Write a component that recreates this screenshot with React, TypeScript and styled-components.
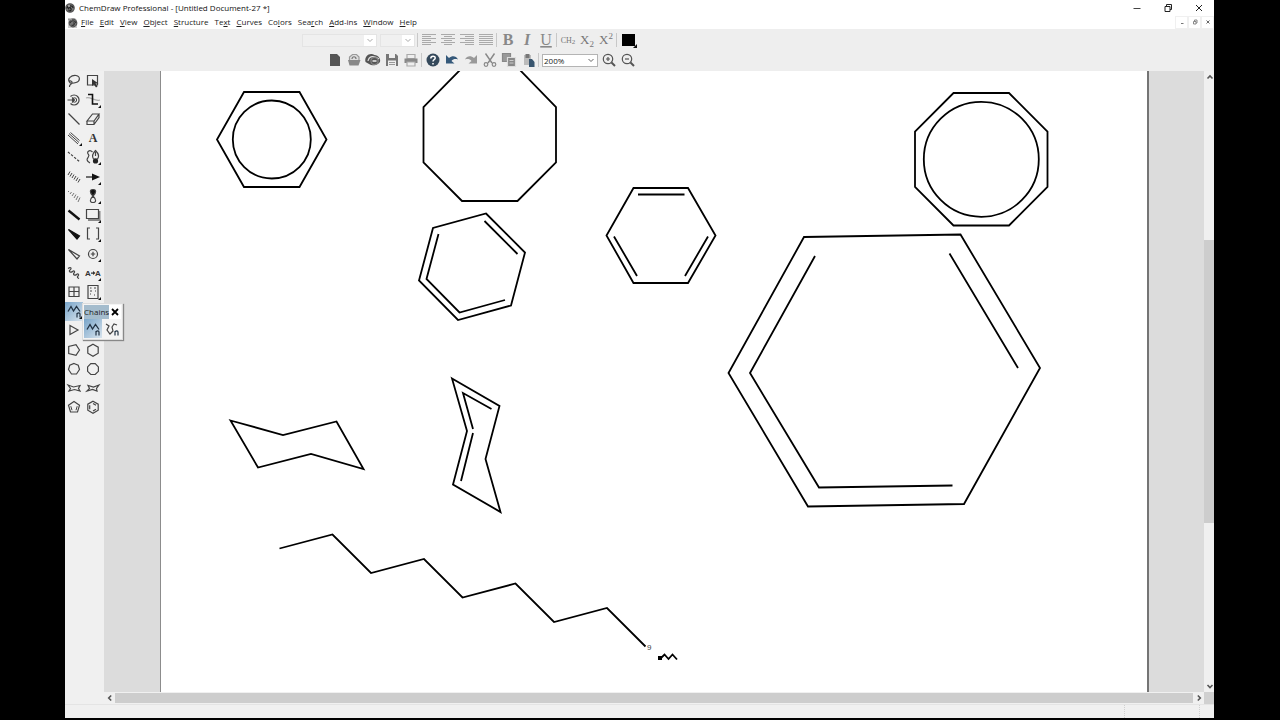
import React from "react";
import styled, { createGlobalStyle, css } from "styled-components";

const GlobalStyle = createGlobalStyle`
  * { box-sizing: border-box; }
  body { margin: 0; background: #000; color: #222; font-family: "Open Sans", "Noto Sans", sans-serif; font-size: 8px; }
  button, input, select { font: inherit; color: inherit; margin: 0; }
  svg { display: block; flex: none; }
`;

const Frame = styled.div`
  display: flex;
  flex-direction: column;
  height: 100vh;
  padding: 0 66px 2px 65px;
`;

const bare = css`
  display: flex;
  align-items: center;
  justify-content: center;
  padding: 0;
  border: 0;
  background: transparent;
`;

const TitleBar = styled.header`
  display: flex;
  align-items: center;
  height: 15px;
  background: #fff;
`;
const Title = styled.h1`
  flex: 1;
  margin: 0;
  padding-left: 4px;
  font-size: 8px;
  line-height: 15px;
  font-weight: 400;
  color: #111;
`;
const WindowButton = styled.button`
  ${bare}
  width: 31px;
  height: 15px;
`;
const MenuBar = styled.nav`
  display: flex;
  align-items: center;
  height: 14px;
  padding-left: 2px;
  background: #fff;
`;
const MenuList = styled.div`
  display: flex;
  flex: 1;
  gap: 6px;
  padding-left: 3px;
`;
const MenuButton = styled.button`
  ${bare}
  line-height: 14px;
  white-space: nowrap;
`;
const ChildButton = styled.button`
  ${bare}
  width: 13px;
  height: 13px;
  border: 1px solid #f0f0f0;
`;

const Toolbars = styled.div`
  flex: none;
  height: 42px;
  padding-top: 1px;
  background: #eee;
`;
const ToolRow = styled.div<{ $indent: number }>`
  display: flex;
  align-items: center;
  height: 20px;
  padding-left: ${(p) => p.$indent}px;
`;
const ToolButton = styled.button`
  ${bare}
  width: 19px;
  height: 19px;
`;
const Divider = styled.span`
  width: 1px;
  height: 14px;
  margin: 0 1px;
  background: #c8c8c8;
`;
const Combo = styled.label<{ $width: number; $dim?: boolean }>`
  display: flex;
  align-items: center;
  position: relative;
  width: ${(p) => p.$width}px;
  height: 13px;
  margin: 0 1px 0 2px;
  border: 1px solid ${(p) => (p.$dim ? "#e4e4e4" : "#b4b4b4")};
  background: ${(p) => (p.$dim ? "linear-gradient(to left, #fff 12px, #f0f0f0 12px)" : "#fff")};
  svg { position: absolute; right: 2px; pointer-events: none; }
`;
const ComboSelect = styled.select`
  appearance: none;
  width: 100%;
  height: 11px;
  padding: 0 0 0 1px;
  border: 0;
  background: transparent;
  color: #222;
  line-height: 11px;
`;

const Main = styled.main`
  display: flex;
  flex: 1;
  min-height: 0;
`;
const Side = styled.aside`
  position: relative;
  flex: none;
  width: 39px;
  background: #f0f0f0;
`;
const Palette = styled.div`
  display: grid;
  grid-template-columns: 18px 20px;
  grid-template-rows: repeat(18, 1fr);
  height: 346px;
`;
const PaletteButton = styled.button<{ $on?: boolean }>`
  ${bare}
  ${(p) => p.$on && css`background: linear-gradient(135deg, #78a4c8, #d8e4ee);`}
`;
const Flyout = styled.section`
  position: absolute;
  z-index: 2;
  left: 17px;
  top: 232px;
  width: 41px;
  height: 37px;
  padding: 1px;
  border: 1px solid #ddd;
  background: #f4f4f4;
  box-shadow: 1px 1px 1px #888;
`;
const FlyoutHead = styled.div`
  display: flex;
  height: 14px;
  background: #a4bccd;
`;
const FlyoutTitle = styled.h2`
  flex: 1;
  margin: 0;
  font-size: 8px;
  line-height: 13px;
  font-weight: 400;
`;
const CloseButton = styled.button`
  ${bare}
  width: 13px;
  background: #fff;
`;
const FlyoutTools = styled.div`
  display: grid;
  grid-template-columns: 18px 19px;
  height: 19px;
`;

const Document = styled.div`
  display: flex;
  flex: 1;
  flex-direction: column;
  min-width: 0;
`;
const Viewport = styled.div`
  display: flex;
  flex: 1;
  min-height: 0;
`;
const Desk = styled.div`
  display: flex;
  flex: 1;
  min-width: 0;
  padding: 0 55px 0 56px;
  background: #dcdcdc;
`;
const Page = styled.div`
  flex: 1;
  min-width: 0;
  overflow: hidden;
  border-left: 1px solid #8c8c8c;
  border-right: 2px solid #747474;
  background: #fff;
`;
const VScroll = styled.div`
  display: flex;
  flex-direction: column;
  width: 10px;
  background: #f0f0f0;
`;
const HScroll = styled.div`
  display: flex;
  height: 12px;
  background: #f0f0f0;
`;
const ScrollButton = styled.button`
  ${bare}
  flex: none;
  width: 11px;
  height: 12px;
`;
const VTrack = styled.div`
  display: grid;
  flex: 1;
  grid-template-rows: 157fr 283fr 157fr;
`;
const VThumb = styled.div`
  grid-row: 2;
  background: #cdcdcd;
`;
const HThumb = styled.div`
  flex: 1;
  margin: 1px 0;
  background: #cdcdcd;
`;
const Corner = styled.div`
  width: 10px;
  background: #d0d0d0;
`;
const StatusBar = styled.footer`
  display: flex;
  flex: none;
  justify-content: flex-end;
  height: 14px;
  padding-right: 14px;
  border-top: 1px solid #e4e4e4;
  background: #f0f0f0;
`;
const StatusCell = styled.span`
  width: 76px;
  border-left: 1px dotted #d0d0d0;
  border-right: 1px dotted #d0d0d0;
`;

const Glyph = ({ children, size = 18, color = "#444", weight = 1.2 }: { children: React.ReactNode; size?: number; color?: string; weight?: number }) => (
  <svg width={size} height={size} viewBox={`0 0 ${size} ${size}`} fill="none" stroke={color} strokeWidth={weight} aria-hidden="true">
    {children}
  </svg>
);
const Chevron = ({ dir, color = "#555", weight = 1.6 }: { dir: "up" | "down" | "left" | "right"; color?: string; weight?: number }) => {
  const d = { up: "M1.5 5.5 4 3l2.5 2.5", down: "M1.5 3 4 5.5 6.5 3", left: "M5.2 1.5 2.7 4l2.5 2.5", right: "M2.8 1.5 5.3 4 2.8 6.5" }[dir];
  return <Glyph size={8} color={color}><path d={d} strokeWidth={weight} /></Glyph>;
};
const AppLogo = () => (
  <Glyph size={10} color="#555">
    <circle cx="5" cy="5" r="4.2" fill="#777" />
    <path d="M2 5.5C2 2 8 2 8 5M3.5 7.5C6 8.5 7 6.5 5.5 5S3 5 4 6.5" stroke="#222" />
    <circle cx="4" cy="3" r="1" fill="#bbb" stroke="none" />
  </Glyph>
);
const ChildLogo = () => (
  <Glyph size={11} color="#777">
    <path d="M1 1h7l2 2v8H1z" fill="#ccc" stroke="none" />
    <circle cx="6" cy="6" r="3.8" fill="#777" stroke="#555" />
    <path d="M3 6c1-3 5-3 6 0M4.500 8c2 1 4-1 2-2.500" stroke="#333" />
    <path d="M1 2.500h4" stroke="#999" />
  </Glyph>
);

const more = <path d="M17 14v3h-3z" fill="#111" stroke="none" />;
const hex = "M9 3.200l5.200 3v6L9 15.200l-5.200-3v-6z";
const chain = <path d="M3 9.500 6 4.500l2.500 4.500L11.500 4.500 15 9.500" stroke="#234" strokeWidth="1.3" />;
const chainN = <path d="M12 15.500v-4.500m0 1c1-1.500 3-1.500 3 0v3.500" stroke="#234" strokeWidth="1.200" />;

const tools: [string, React.ReactNode][] = [
  ["Lasso", <path d="M4.500 10C2 7 6 3 11 3.500c5 1 4 6 0 7-3 1-6 1-6.500-.5 0-2 3-1 2.500.8S4 12 4.500 15" />],
  ["Marquee", <><path d="M3.500 3.500h10v9.500h-10z" /><path d="M8 7v7l2-1.500 2 3 1.500-1-2-3H14.500z" fill="#333" stroke="none" /></>],
  ["3D rotation", <><path d="M5.500 5.500a5 5 0 1 1 0 7" /><circle cx="9.500" cy="9" r="2.200" strokeWidth="1" /><path d="M2.500 9h7M7 6.500 9.500 9 7 11.500" strokeWidth="1.200" /></>],
  ["Structure perspective", <><path d="M2 7c4-2 9 4 14 2" stroke="#aaa" /><path d="M4 3.500h4.500V13H14" stroke="#111" strokeWidth="1.600" />{more}</>],
  ["Solid bond", <path d="M3.500 3.500 14.500 14.500" strokeWidth="1.300" />],
  ["Eraser", <path d="M3 11 8.500 4H15l-5 7zM3 11v3.500h7l5-7V4M10 11v3.500" />],
  ["Multiple bonds", <><path d="M3 6l10 9M4 4.500 14 13.500M5.500 3.500l9 8" strokeWidth="1" />{more}</>],
  ["Text", <text x="9" y="13" textAnchor="middle" fontFamily="Liberation Serif, serif" fontSize="12" fontWeight="700" fill="#333" stroke="none">A</text>],
  ["Dashed bond", <path d="M3 4l12 10" strokeDasharray="2.500 1.500" />],
  ["Pen", <><path d="M6 15C-1 11 7 9 4.500 6.500S5.500 1 8.500 4M9.500 11c-2-3-.5-6 2-8.500C14 5 16 8 13.500 11zM11.500 4v4" /><circle cx="11.500" cy="13" r="2.600" fill="#222" stroke="none" />{more}</>],
  ["Hashed bond", <path d="M3 7l2-3.500M5 8.500l2-3.500M7 10l2-3.500M9 11.500l2-3.500M11 13l2-3.500M13 14.500l2-3.500" strokeWidth="1" />],
  ["Arrow", <><path d="M2 9h8" strokeWidth="1.500" /><path d="M8 5.500 16 9l-8 3.500z" fill="#111" stroke="none" />{more}</>],
  ["Hashed wedge", <path d="M3 5l1-1M5 7l1.500-2M7 9l2-3M9 11l2-3.500M11 13l2-4M13 15l2-4.500" stroke="#777" strokeWidth="1" />],
  ["Orbital", <><path d="M9 9C5 5 6 2.500 9 2.500S13 5 9 9z" fill="#111" /><path d="M9 9c-4 4-3 6.500 0 6.500S13 13 9 9z" />{more}</>],
  ["Bold bond", <path d="M3.500 4.500l11 9" stroke="#111" strokeWidth="2.300" />],
  ["Drawing elements", <><path d="M15.500 5v9H4" stroke="#888" strokeWidth="2" /><path d="M2.500 3.500h12v9h-12z" />{more}</>],
  ["Wedge bond", <path d="M3.500 4.500l11 6.500-2.500 3z" fill="#111" stroke="#111" />],
  ["Brackets", <><path d="M6 3H3.500v11H6M12 3h2.500v11H12" />{more}</>],
  ["Hollow wedge", <path d="M3.500 4.500l11 6.500-2.500 3z" />],
  ["Chemical symbols", <><circle cx="9" cy="9" r="4.500" /><path d="M9 6.800v4.400M6.800 9h4.400" />{more}</>],
  ["Wavy bond", <path d="M3 4.500c3-2 4 0 2 1.500s1 3 2.500 1.500 3 0 1.500 1.500 1 3 2.500 1.500 3 0 1.500 1.500 0 2 1 2.500" />],
  ["Atom mapping", (
    <>
      <g fontFamily="Liberation Sans, sans-serif" fontSize="8" fontWeight="700" fill="#333" stroke="none">
        <text x="1" y="12">A</text>
        <text x="11" y="12">A</text>
        <path d="M7 8.500h2V7l2.500 2L9 11V9.700H7z" />
      </g>
      {more}
    </>
  )],
  ["Table", <path d="M4 4h10v9.500H4zM9 4v9.500M4 8.500h10" strokeWidth="1.200" />],
  ["Templates", <><path d="M4 2.500h10v13H4z" /><path d="M6 5h1.500M10 5h2M6 8h2M11 8h1M6 11h1M10 12h1" />{more}</>],
  ["Acyclic chain", <>{chain}{chainN}{more}</>],
  ["Ring", null],
  ["Cyclopropane ring", <path d="M5 4.500 13 9l-8 4.500z" />],
  ["Cyclobutane ring", null],
  ["Cyclopentane ring", <path d="M14.500 9 11 3.700 3.700 5.500v7L11 14.300z" />],
  ["Cyclohexane ring", <path d={hex} />],
  ["Cycloheptane ring", <path d="M9 3.500 13.200 5.200 14.500 9.500 11.500 14h-5L3.500 9.500 4.800 5.200z" />],
  ["Cyclooctane ring", <path d="M6.800 3.700h4.400l3.200 3.200v4.400l-3.200 3.200H6.800l-3.200-3.200V6.900z" />],
  ["Chair left", <path d="M3 6l5.500 2L15 6.500l-1.500 3L15 12l-5.500-1.500L4 12l1.500-2.500z" />],
  ["Chair right", <path d="M15 6l-5.500 2L4 6.500l1.500 3L3 12l5.500-1.500L13 12l-.5-2.500z" />],
  ["Cyclopentadiene ring", <><path d="M9 3.500 14.500 7.300 12.500 14h-7L3.500 7.300z" /><path d="M5.800 8.200l1.200 4M12.200 8.200l-1.200 4" strokeWidth="1" /></>],
  ["Benzene ring", <><path d={hex} /><path d="M9 5.500l3 1.700M12 11.200 9 12.900M5.700 7.200v4" /></>],
];

const menus: [string, number][] = [["File", 0], ["Edit", 0], ["View", 0], ["Object", 0], ["Structure", 0], ["Text", 2], ["Curves", 0], ["Colors", 2], ["Search", 3], ["Add-ins", 0], ["Window", 0], ["Help", 0]];

const Lines = ({ widths, x }: { widths: number[]; x: number[] }) => (
  <Glyph color="#aaa" weight={1}>{widths.map((w, i) => <path key={i} d={`M${x[i]} ${3.5 + i * 2}h${w}`} />)}</Glyph>
);
const Letter = ({ children, bold, italic, under }: { children: React.ReactNode; bold?: boolean; italic?: boolean; under?: boolean }) => (
  <Glyph><text x="9" y="14" textAnchor="middle" fontFamily="Liberation Serif, serif" fontSize="16" fontWeight={bold ? 700 : 400} fontStyle={italic ? "italic" : "normal"} textDecoration={under ? "underline" : "none"} fill="#888" stroke="none">{children}</text></Glyph>
);

const formatGroups: [string, React.ReactNode][][] = [
  [
    ["Align left", <Lines widths={[14, 9, 14, 9, 14, 9]} x={[2, 2, 2, 2, 2, 2]} />],
    ["Align center", <Lines widths={[14, 8, 14, 8, 14, 8]} x={[2, 5, 2, 5, 2, 5]} />],
    ["Align right", <Lines widths={[14, 9, 14, 9, 14, 9]} x={[2, 7, 2, 7, 2, 7]} />],
    ["Justify", <Lines widths={[14, 14, 14, 14, 14, 14]} x={[2, 2, 2, 2, 2, 2]} />],
  ],
  [["Bold", <Letter bold>B</Letter>], ["Italic", <Letter italic bold>I</Letter>], ["Underline", <Letter under>U</Letter>]],
  [
    ["Formula", <Glyph><text x="9" y="12" textAnchor="middle" fontFamily="Liberation Serif, serif" fontSize="8" fill="#777" stroke="none">CH<tspan fontSize="7" dy="1">2</tspan></text></Glyph>],
    ["Subscript", <Glyph><text x="9" y="13" textAnchor="middle" fontFamily="Liberation Serif, serif" fontSize="13" fill="#777" stroke="none">X<tspan fontSize="9" dy="3">2</tspan></text></Glyph>],
    ["Superscript", <Glyph><text x="9" y="13" textAnchor="middle" fontFamily="Liberation Serif, serif" fontSize="13" fill="#777" stroke="none">X<tspan fontSize="9" dy="-5">2</tspan></text></Glyph>],
  ],
  [["Color", <Glyph><path d="M3 3h13v12H3z" fill="#000" stroke="none" /><path d="M18 13v4h-4z" fill="#111" stroke="none" /></Glyph>]],
];

const fileGroup: [string, React.ReactNode][] = [
  ["New", <path d="M4 3h7l3 3v9H4z" fill="#555" stroke="none" />],
  ["Open", <><path d="M4.500 9V6l3-2.500h4L14 6v3" fill="#ddd" stroke="#999" /><path d="M7 8c0-3 4-3 4 0" stroke="#777" /><path d="M3 9h12.500l-2 5.500h-9z" fill="#888" stroke="none" /></>],
  ["Cloud open", <><path d="M1.500 11C0 5 6 1 10.500 4c4 0 6.500 4 5.500 7-3 4-8 4-11 2z" fill="#555" stroke="none" /><path d="M4 10c1-5 6-6 11-2" stroke="#ddd" /><circle cx="10.500" cy="10" r="3.600" fill="#555" stroke="#888" /><path d="M8.500 10h4" stroke="#eee" strokeWidth="1.500" /></>],
  ["Save", <><path d="M3 3h10l2 2v10H3z" fill="#777" stroke="none" /><path d="M6 3h6v4H6zM5 9.500h8V15H5z" fill="#eee" stroke="none" /><path d="M6 11.500h6M6 13.500h6" stroke="#999" /></>],
  ["Print", <><path d="M5 3.500h8v4H5z" fill="#eee" stroke="#aaa" /><path d="M2.500 7.500h13v4.500h-13z" fill="#888" stroke="none" /><path d="M5 11h8v4H5z" fill="#eee" stroke="#aaa" /></>],
];
const editGroup: [string, React.ReactNode][] = [
  ["Help", <><circle cx="9" cy="9" r="6.500" fill="#35495b" stroke="none" /><path d="M6.800 7.500c0-3 4.400-3 4.400-.5 0 1.800-2.200 1.500-2.200 3.500M9 12v1.500" stroke="#fff" strokeWidth="1.500" /></>],
  ["Undo", <path d="M3 4v8.500h8.500L8.500 10c1.500-2 4-2.500 6.500-1.500C13 4.500 9 4.500 6 7z" fill="#35597a" stroke="none" />],
  ["Redo", <path d="M15 4v8.500H6.500l3-2.500C8 8 5.500 7.500 3 8.500 5 4.500 9 4.500 12 7z" fill="#999" stroke="none" />],
  ["Cut", <><path d="M4.500 2.500 11 12M13.500 2.500 7 12" stroke="#888" strokeWidth="1.400" /><circle cx="5" cy="13.500" r="1.800" stroke="#888" /><circle cx="13" cy="13.500" r="1.800" stroke="#888" /></>],
  ["Copy", <><path d="M2.500 2.500h8v8h-8z" fill="#999" stroke="#888" /><path d="M7.500 6.500h8v9h-8z" fill="#888" stroke="#ddd" /><path d="M9.500 9.500h4M9.500 12h4" stroke="#ccc" /></>],
  ["Paste", <><path d="M5 4h7v10H5z" fill="#bbb" stroke="none" /><path d="M6.500 3h4v4h-4z" fill="#777" stroke="none" /><path d="M10 8h3l2.500 3v5H10z" fill="#39566f" stroke="none" /></>],
];

const structures = [
  "M244 92h55.500l27 47.500-27 47.500H244l-27-47.500z",
  "M462 68h56l38 39v55.500L517.500 201H462l-38.500-38.500V107z",
  "M486 213.500 525 252.500l-14 53-53 14.500-39-39.500L433 228zM484.500 221l33 33M438.500 234l-12 45 33 33.500 45.500-12.500",
  "M633.500 188H688l27.500 47.500L688 283h-54.500l-27-47.500zM638 194.500h46.500M614 236.500l23 39.500M708 236.500 685 276",
  "M953.500 93h55.500l38.500 38.500V187L1009 225.500h-55.500L915 187v-55.500z",
  "M804 237l156.500-2.500L1040 368l-76 136-156 2.500L728.500 373zM815 256l-65 117 69 114.500 133.500-2M949.500 253.500 1018 368",
  "M230.500 420.500 283 435l53.500-13.500L363.500 469 311 454l-53 13.500z",
  "M452 378.500 499.500 406l-14 53 15 53-47.500-27.500L467 431zM491.500 409 463 393l10 36M473 433l-12 48",
  "M279.500 548.500l53-14 38.500 38.500 53-14 38.500 38.500 53-14 38.500 38.500 53-14 38.500 38.500",
];

const Drawing = () => (
  <svg width="986" height="621" viewBox="161 71 986 621" fill="none" stroke="#000" strokeWidth="1.8" role="img" aria-label="Chemical structures">
    {structures.map((d) => <path key={d} d={d} />)}
    <circle cx="271.800" cy="139.500" r="39" />
    <circle cx="981.300" cy="159.300" r="57.500" />
    <text x="647" y="650" fontSize="8" fontFamily="Liberation Sans, sans-serif" fill="#444" stroke="none">9</text>
    <path d="M658 656h4v4h-4z" fill="#000" stroke="none" />
    <path d="M661 658l3.500-3.500L668.500 659l4-4.500 4.500 5" />
  </svg>
);

const Tool = ({ label, children }: { label: string; children: React.ReactNode }) => (
  <ToolButton type="button" aria-label={label}>{children}</ToolButton>
);

export default function App() {
  return (
    <>
      <GlobalStyle />
      <Frame>
        <TitleBar>
          <AppLogo />
          <Title>ChemDraw Professional - [Untitled Document-27 *]</Title>
          <WindowButton aria-label="Minimize"><Glyph size={10} weight={1}><path d="M1.500 5.500h7" /></Glyph></WindowButton>
          <WindowButton aria-label="Restore"><Glyph size={10} color="#222" weight={1}><path d="M2 3.500h5v5H2zM3.500 3.500v-2h5v5H7" /></Glyph></WindowButton>
          <WindowButton aria-label="Close"><Glyph size={10} color="#222" weight={1}><path d="M2 2l6 6M8 2 2 8" /></Glyph></WindowButton>
        </TitleBar>
        <MenuBar aria-label="Main menu">
          <ChildLogo />
          <MenuList>
            {menus.map(([name, k]) => (
              <MenuButton key={name} type="button"><span>{name.slice(0, k)}<u>{name[k]}</u>{name.slice(k + 1)}</span></MenuButton>
            ))}
          </MenuList>
          <ChildButton aria-label="Minimize document"><Glyph size={8} color="#777" weight={1}><path d="M3 5.500h2.500" /></Glyph></ChildButton>
          <ChildButton aria-label="Restore document"><Glyph size={8} color="#888" weight={1}><path d="M2.500 3.500h2.500v2.500H2.500zM3.500 3.500v-1.500H6v3H5" /></Glyph></ChildButton>
          <ChildButton aria-label="Close document"><Glyph size={8} color="#666" weight={1}><path d="M2.500 2.500l3 3M5.500 2.500l-3 3" /></Glyph></ChildButton>
        </MenuBar>
        <Toolbars>
          <ToolRow $indent={235}>
            <Combo $width={75} $dim><ComboSelect aria-label="Font" disabled /><Chevron dir="down" color="#aaa" weight={1} /></Combo>
            <Combo $width={35} $dim><ComboSelect aria-label="Font size" disabled /><Chevron dir="down" color="#aaa" weight={1} /></Combo>
            {formatGroups.map((group, i) => (
              <React.Fragment key={i}>
                <Divider />
                {group.map(([label, icon]) => <Tool key={label} label={label}>{icon}</Tool>)}
              </React.Fragment>
            ))}
          </ToolRow>
          <ToolRow $indent={260}>
            {fileGroup.map(([label, icon]) => <Tool key={label} label={label}><Glyph>{icon}</Glyph></Tool>)}
            <Divider />
            {editGroup.map(([label, icon]) => <Tool key={label} label={label}><Glyph>{icon}</Glyph></Tool>)}
            <Divider />
            <Combo $width={56}>
              <ComboSelect aria-label="Zoom" defaultValue="200%"><option>200%</option></ComboSelect>
              <Chevron dir="down" color="#666" weight={1} />
            </Combo>
            <Tool label="Zoom in"><Glyph color="#555"><circle cx="8" cy="8" r="4.700" /><path d="M8 6v4M6 8h4" /><path d="M11.500 11.500 15 15" strokeWidth="2" /></Glyph></Tool>
            <Tool label="Zoom out"><Glyph color="#555"><circle cx="8" cy="8" r="4.700" /><path d="M6 8h4" /><path d="M11.500 11.500 15 15" strokeWidth="2" /></Glyph></Tool>
          </ToolRow>
        </Toolbars>
        <Main>
          <Side>
            <Palette>
              {tools.map(([label, icon]) => (
                <PaletteButton key={label} type="button" aria-label={label} $on={label === "Acyclic chain"}>
                  <Glyph>{icon}</Glyph>
                </PaletteButton>
              ))}
            </Palette>
            <Flyout aria-label="Chains">
              <FlyoutHead>
                <FlyoutTitle>Chains</FlyoutTitle>
                <CloseButton aria-label="Close chains"><Glyph size={10} color="#000"><path d="M2 2l6 6M8 2 2 8" strokeWidth="1.800" /></Glyph></CloseButton>
              </FlyoutHead>
              <FlyoutTools>
                <PaletteButton type="button" aria-label="Straight chain" $on><Glyph>{chain}{chainN}</Glyph></PaletteButton>
                <PaletteButton type="button" aria-label="Snaking chain"><Glyph><path d="M3 4l3 2-2 4 3 4 3-3-1-4 2-3 3 1" />{chainN}</Glyph></PaletteButton>
              </FlyoutTools>
            </Flyout>
          </Side>
          <Document>
            <Viewport>
              <Desk><Page><Drawing /></Page></Desk>
              <VScroll>
                <ScrollButton aria-label="Scroll up"><Chevron dir="up" /></ScrollButton>
                <VTrack><VThumb /></VTrack>
                <ScrollButton aria-label="Scroll down"><Chevron dir="down" /></ScrollButton>
              </VScroll>
            </Viewport>
            <HScroll>
              <ScrollButton aria-label="Scroll left"><Chevron dir="left" /></ScrollButton>
              <HThumb />
              <ScrollButton aria-label="Scroll right"><Chevron dir="right" /></ScrollButton>
              <Corner />
            </HScroll>
          </Document>
        </Main>
        <StatusBar><StatusCell /></StatusBar>
      </Frame>
    </>
  );
}
